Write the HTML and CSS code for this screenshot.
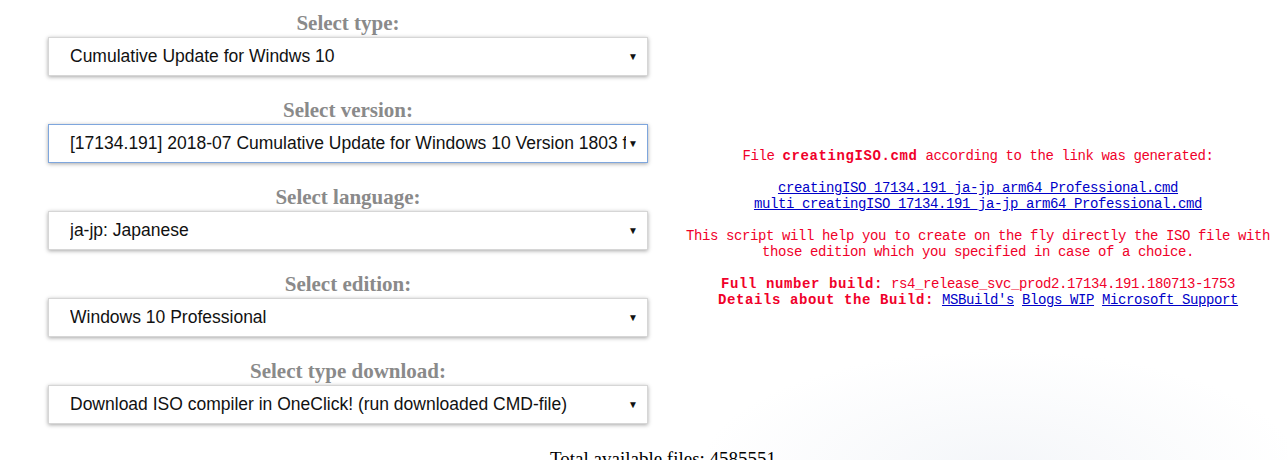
FILE: index.html
```html
<!DOCTYPE html>
<html>
<head>
<meta charset="utf-8">
<link rel="stylesheet" href="styles.css">
</head>
<body>
<div class="page">
  <div class="row">
    <div class="left">
      <div class="label">Select type:</div>
      <div class="select"><span class="val">Cumulative Update for Windws 10</span><span class="arrow">▼</span></div>
      <div class="label">Select version:</div>
      <div class="select focused"><span class="val">[17134.191] 2018-07 Cumulative Update for Windows 10 Version 1803 f</span><span class="arrow">▼</span></div>
      <div class="label">Select language:</div>
      <div class="select"><span class="val">ja-jp: Japanese</span><span class="arrow">▼</span></div>
      <div class="label">Select edition:</div>
      <div class="select"><span class="val">Windows 10 Professional</span><span class="arrow">▼</span></div>
      <div class="label">Select type download:</div>
      <div class="select"><span class="val">Download ISO compiler in OneClick! (run downloaded CMD-file)</span><span class="arrow">▼</span></div>
    </div>
    <div class="right">
      <p>File <b>creatingISO.cmd</b> according to the link was generated:</p>
      <p><a href="#">creatingISO_17134.191_ja-jp_arm64_Professional.cmd</a><br><a href="#">multi_creatingISO_17134.191_ja-jp_arm64_Professional.cmd</a></p>
      <p>This script will help you to create on the fly directly the ISO file with<br>those edition which you specified in case of a choice.</p>
      <p><b>Full number build:</b> rs4_release_svc_prod2.17134.191.180713-1753<br><b>Details about the Build:</b> <a href="#">MSBuild's</a> <a href="#">Blogs WIP</a> <a href="#">Microsoft Support</a></p>
    </div>
  </div>
  <div class="total">Total available files: 4585551</div>
</div>
</body>
</html>
```
FILE: styles.css
```css
html, body {
  margin: 0;
  padding: 0;
  background: #fff;
  overflow: hidden;
}
.page {
  width: 1288px;
  height: 460px;
  overflow: hidden;
  background: radial-gradient(ellipse 300px 120px at 1000px 470px, #f4f6f9 0%, rgba(255,255,255,0) 100%);
}
.row {
  display: flex;
  align-items: center;
  padding-top: 10px;
}
.left {
  width: 600px;
  margin-left: 48px;
  display: flex;
  flex-direction: column;
}
.label {
  font-family: "Liberation Serif", "DejaVu Serif", serif;
  font-weight: bold;
  font-size: 21px;
  line-height: 26px;
  color: #8a8a8a;
  text-align: center;
  margin-bottom: 1px;
}
.select {
  height: 37px;
  border: 1px solid #d6d6d6;
  box-shadow: 0 1px 4px rgba(0,0,0,0.35);
  display: flex;
  align-items: center;
  padding-left: 21px;
  padding-right: 9px;
  margin-bottom: 21px;
  font-family: "Liberation Sans", Arial, sans-serif;
  font-size: 17.5px;
  color: #111;
  background: #fff;
}
.select:last-child {
  margin-bottom: 0;
}
.select.focused {
  border-color: #7ea6dd;
}
.val {
  flex: 1;
  white-space: nowrap;
  overflow: hidden;
}
.arrow {
  font-size: 10px;
  color: #111;
  margin-left: 2px;
}
.right {
  flex: 1;
  margin-left: 28px;
  margin-right: 8px;
  text-align: center;
  font-family: "Liberation Mono", "DejaVu Sans Mono", monospace;
  font-size: 14px;
  letter-spacing: -0.4px;
  line-height: 16px;
  color: #f0002a;
  padding-top: 22px;
}
.right b {
  letter-spacing: 0.6px;
}
.right p {
  margin: 0 0 16px 0;
}
.right p:last-child {
  margin-bottom: 0;
}
.right a {
  color: #0000c8;
  text-decoration: underline;
}
.total {
  font-family: "Liberation Serif", serif;
  font-size: 19px;
  color: #000;
  padding-left: 550px;
  margin-top: 24px;
}
```
